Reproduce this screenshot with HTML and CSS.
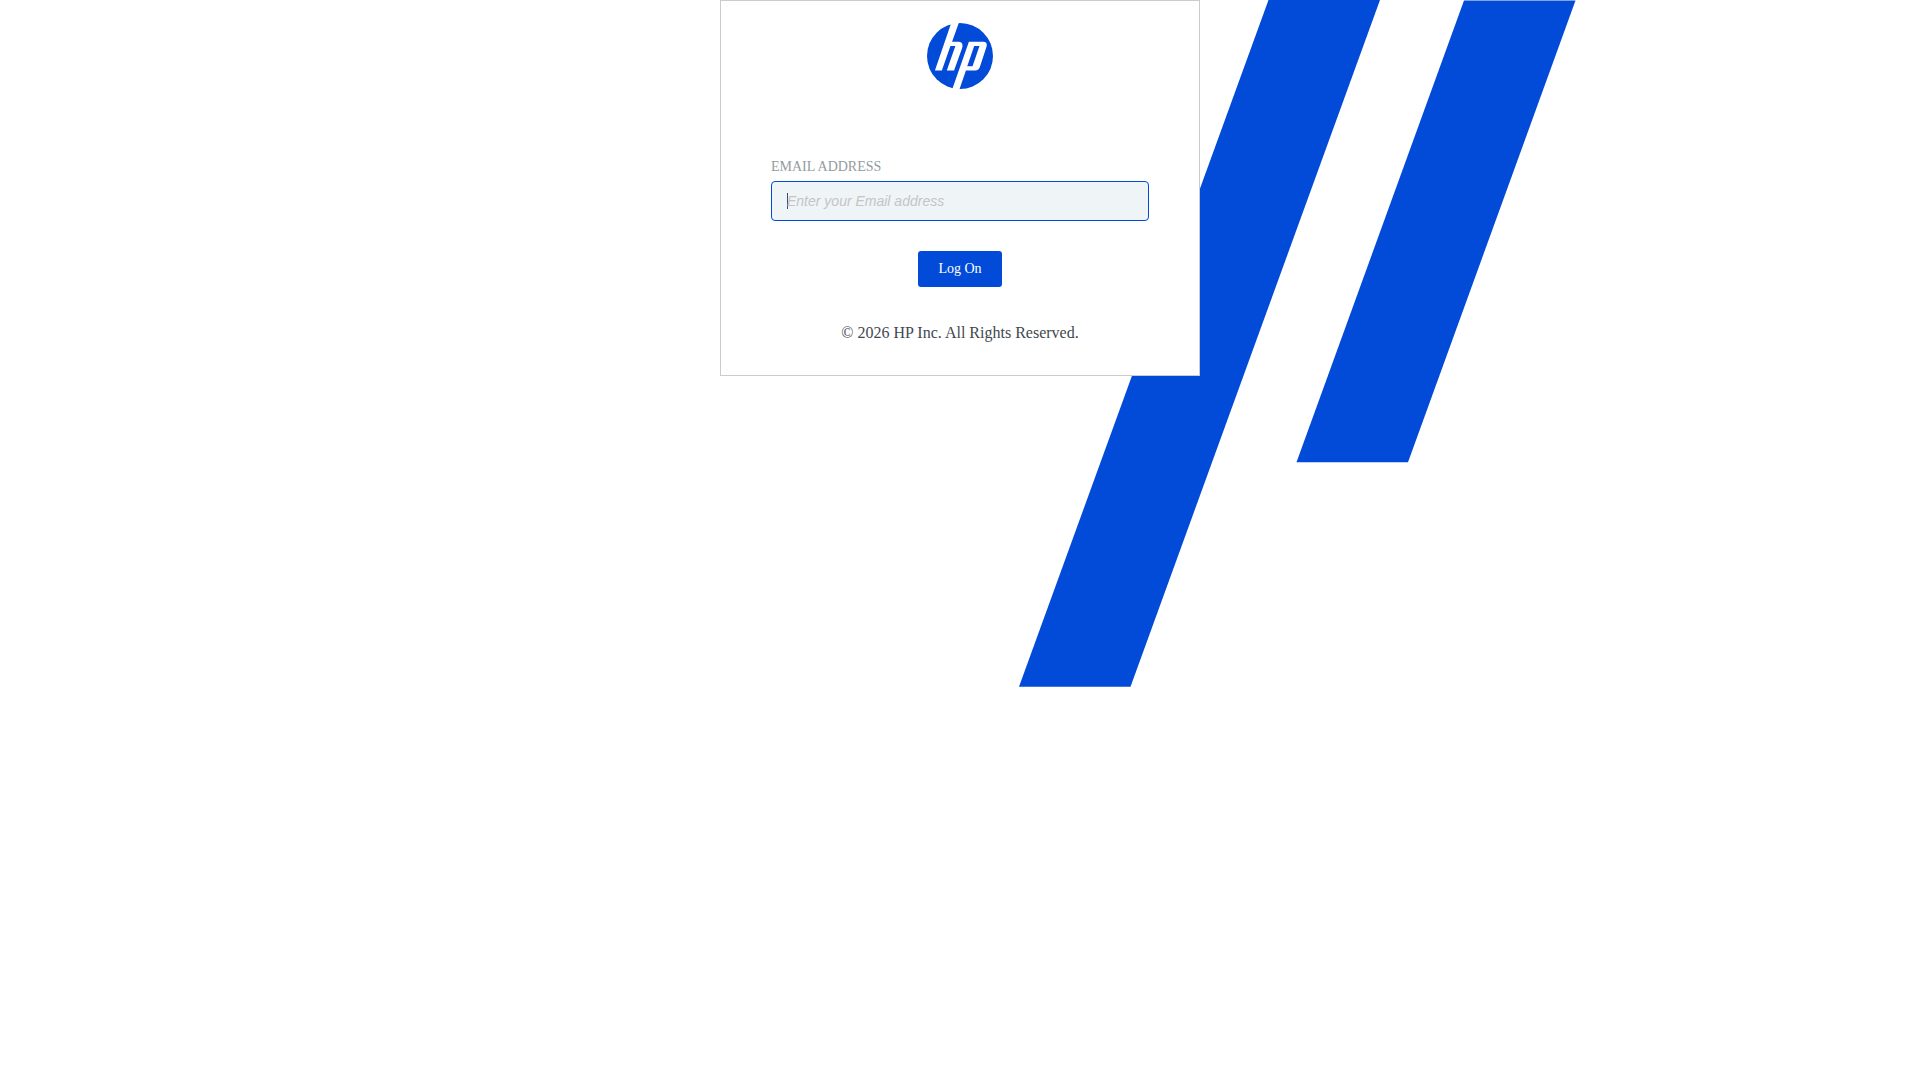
FILE: index.html
```html
<!DOCTYPE html>
<html lang="en">
<head>
  <meta charset="UTF-8">
  <meta name="viewport" content="width=device-width, initial-scale=1.0">
  <title>HP - Log On</title>
  <link rel="stylesheet" href="styles.css">
</head>
<body>

  <!-- Background stripes -->
  <svg class="stripes" viewBox="0 0 557 687" aria-hidden="true">
    <path d="M249.500 0H361L111.500 686.700H0Z"/>
    <path d="M445 0.500H556.500L389 462.300H277.500Z"/>
  </svg>

  <!-- Log on card -->
  <main class="login-card">
    <svg class="logo" viewBox="0 0 200 200" role="img" aria-label="HP">
      <circle class="logo-disc" cx="100" cy="100" r="100"/>
      <path class="logo-mark" d="M74 -2L24 144H45L71 70H86L60 144H82L106 77Q112 57 95 57H76L97 -2Z"/>
      <path class="logo-mark" fill-rule="evenodd" d="M127 57H170Q185 57 180 73L161 131Q157 144 146 144H118L98 202H76ZM143 70L122 131H138L159 70Z"/>
    </svg>

    <form class="login-form">
      <label for="email">EMAIL ADDRESS</label>
      <input type="email" id="email" name="email" placeholder="Enter your Email address" autofocus>
      <button type="submit" class="submit-btn">Log On</button>
    </form>

    <footer class="copyright">© 2026 HP Inc. All Rights Reserved.</footer>
  </main>

</body>
</html>
```
FILE: styles.css
```css
/* Basic Styles */
* {
  margin: 0;
  padding: 0;
  box-sizing: border-box;
}

body {
  position: relative;
  min-height: 100vh;
  background-color: #fff;
  color: #3f4850;
  font-family: "Liberation Serif", "Times New Roman", serif;
  font-size: 16px;
  line-height: 20px;
  overflow-x: hidden;
}

/* Stripes behind the card */
.stripes {
  position: absolute;
  top: 0;
  left: calc(50% + 59px);
  width: 557px;
  fill: #024ad8;
  z-index: -1;
}

.login-card {
  display: flex;
  flex-direction: column;
  align-items: center;
  width: 100%;
  max-width: 480px;
  margin: 0 auto;
  padding: 22px 50px 32px;
  background-color: #fff;
  border: 1px solid #ccc;
}

.logo {
  width: 66px;
  height: 66px;
  margin-bottom: 68px;
}

.logo-disc {
  fill: #024ad8;
}

.logo-mark {
  fill: #fff;
}

.login-form {
  display: flex;
  flex-direction: column;
  width: 100%;
  margin-bottom: 36px;
}

.login-form label {
  margin-bottom: 4px;
  color: #939ba1;
  font-size: 14px;
}

.login-form input {
  height: 40px;
  padding: 0 15px;
  background-color: #eff4f7;
  border: 1px solid #024ad8;
  border-radius: 4px;
  outline: none;
  color: #3d4f66;
  font-family: "Liberation Sans", Arial, sans-serif;
  font-size: 14px;
}

/* Steady caret while the field is empty */
.login-form input:placeholder-shown {
  background-image: linear-gradient(#3d4f66, #3d4f66);
  background-repeat: no-repeat;
  background-position: 15px center;
  background-size: 1px 16px;
  caret-color: transparent;
}

.login-form input::placeholder {
  color: #c4c4c4;
  font-style: italic;
}

.submit-btn {
  align-self: center;
  height: 36px;
  margin-top: 30px;
  padding: 0 20px;
  background-color: #024ad8;
  border: none;
  border-radius: 3px;
  color: #fff;
  font-family: inherit;
  font-size: 14px;
  cursor: pointer;
}
```
